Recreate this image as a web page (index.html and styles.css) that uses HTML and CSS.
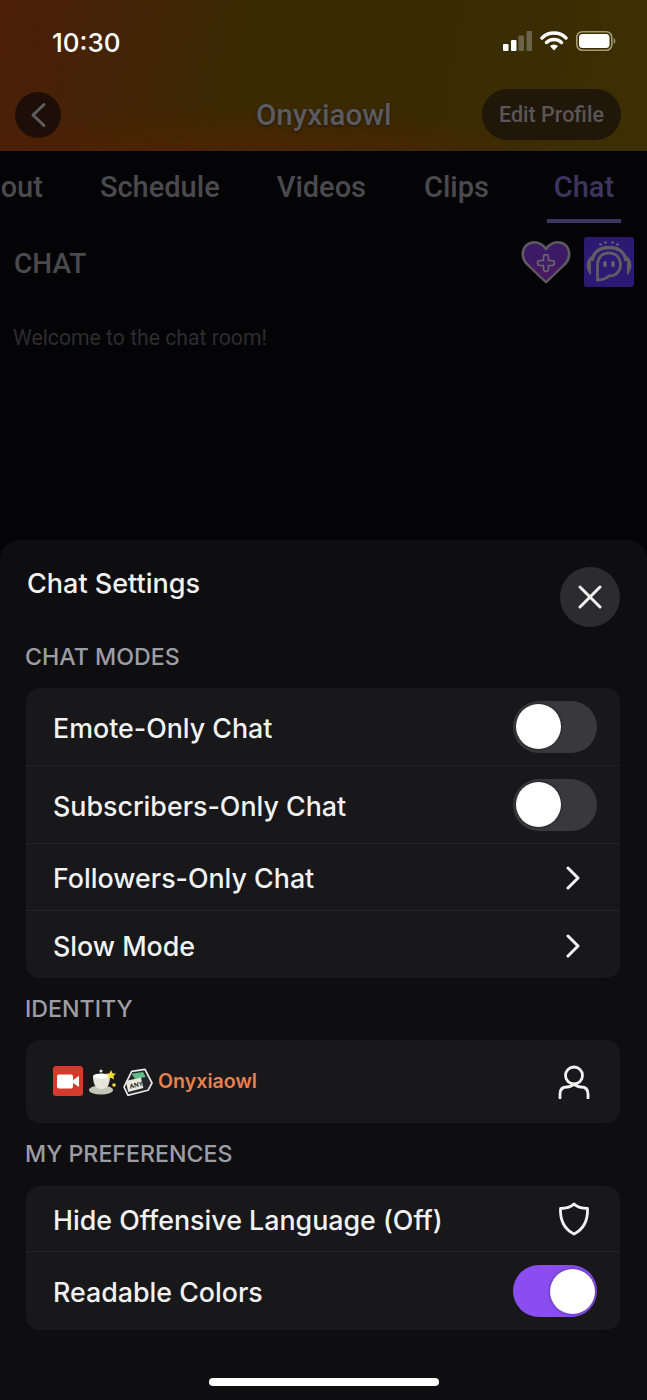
FILE: index.html
```html
<!DOCTYPE html>
<html>
<head>
    <title>Chat Settings</title>
    <link rel="stylesheet" href="styles.css">
</head>
<body>
<div class="screen">
    <header class="top">
        <div class="status">
            <span class="time">10:30</span>
            <div class="status-icons">
                <svg width="29" height="20" viewBox="0 0 29 20">
                    <rect x="0" y="13" width="5.500" height="7" rx="1" fill="#fff"/>
                    <rect x="8" y="9" width="5.500" height="11" rx="1" fill="#fff"/>
                    <rect x="15.500" y="4.500" width="5.500" height="15.500" rx="1" fill="#6b624a"/>
                    <rect x="23.500" y="0" width="5.500" height="20" rx="1" fill="#6b624a"/>
                </svg>
                <svg width="28" height="20" viewBox="0 0 28 20">
                    <path d="M2 7a17 17 0 0 1 24 0M6.500 11.500a11 11 0 0 1 15 0" fill="none" stroke="#fff" stroke-width="3.400" stroke-linecap="round"/>
                    <path d="M10 15a6 6 0 0 1 8 0L14 19.500z" fill="#fff"/>
                </svg>
                <svg width="41" height="20" viewBox="0 0 41 20">
                    <rect x="0.800" y="0.800" width="35" height="18.400" rx="5.500" fill="none" stroke="#a39a78" stroke-width="1.600"/>
                    <rect x="3" y="3" width="30.500" height="14" rx="3.500" fill="#fff"/>
                    <path d="M37.500 7v6c1.300-.5 2-1.700 2-3s-.7-2.500-2-3z" fill="#8f8668"/>
                </svg>
            </div>
        </div>
        <div class="nav">
            <span class="back">
                <svg width="18" height="26" viewBox="0 0 18 26"><path d="M15 2.500 4 13l11 10.500" fill="none" stroke="#5e5e60" stroke-width="3" stroke-linecap="round" stroke-linejoin="round"/></svg>
            </span>
            <span class="nav-title">Onyxiaowl</span>
            <span class="edit-btn">Edit Profile</span>
        </div>
    </header>

    <nav class="tabs">
        <span class="tab tab-about">About</span>
        <span class="tab tab-schedule">Schedule</span>
        <span class="tab tab-videos">Videos</span>
        <span class="tab tab-clips">Clips</span>
        <span class="tab tab-active">Chat</span>
    </nav>

    <div class="chat-head">
        <span class="chat-title">CHAT</span>
        <div class="chat-badges">
            <svg width="50" height="44" viewBox="0 0 50 44">
                <path d="M25 42 5 23C0 17 1 8 7 4c6-3 13-2 18 5 5-7 12-8 18-5 6 4 7 13 2 19z" fill="#3c1a66" stroke="#5d5a60" stroke-width="2.600" stroke-linejoin="round"/>
                <path d="M25 41 8 25c6 3 28 3 34 0z" fill="#4a1a5e" opacity=".7"/>
                <path d="M22.500 17a2.500 2.500 0 0 1 5 0v3.500H31a2.500 2.500 0 0 1 0 5h-3.500V29a2.500 2.500 0 0 1-5 0v-3.500H19a2.500 2.500 0 0 1 0-5h3.500z" fill="#3f2066" stroke="#6a6570" stroke-width="1.600"/>
            </svg>
            <svg class="listen" width="50" height="50" viewBox="0 0 50 50">
                <rect width="50" height="50" rx="3" fill="#2a1a72"/>
                <path d="M16 7.500h1M21 5.500h1M28 5.500h1M33 7.500h1" stroke="#6b6870" stroke-width="2" stroke-linecap="round"/>
                <path d="M8 24c1-9 8-13.500 17-13.500S41 15 42 24" fill="none" stroke="#5f5c66" stroke-width="3.500"/>
                <path d="M6 21.500c-3 3-3.500 10 0 14zM44 21.500c3 3 3.500 10 0 14z" fill="#5f5c66" stroke="#5f5c66" stroke-width="2"/>
                <path d="M25 16c-7 0-11.500 5-11.500 11.500V43c4 0 8.500-1.500 11.500-4 7 0 11.500-5 11.500-11.500S32 16 25 16z" fill="none" stroke="#5f5c66" stroke-width="2.800"/>
                <rect x="19.500" y="24" width="3" height="6" rx="1.500" fill="#6b6870"/>
                <rect x="27.500" y="24" width="3" height="6" rx="1.500" fill="#6b6870"/>
            </svg>
        </div>
    </div>
    <p class="welcome">Welcome to the chat room!</p>

    <section class="sheet">
        <div class="sheet-head">
            <h2>Chat Settings</h2>
            <span class="close">
                <svg width="24" height="24" viewBox="0 0 24 24"><path d="M2 2l20 20M22 2 2 22" stroke="#f2f2f2" stroke-width="3" stroke-linecap="round"/></svg>
            </span>
        </div>

        <h3 class="label label-modes">CHAT MODES</h3>
        <div class="card">
            <div class="row row-tall"><span>Emote-Only Chat</span><span class="toggle"></span></div>
            <div class="row row-tall"><span>Subscribers-Only Chat</span><span class="toggle"></span></div>
            <div class="row"><span>Followers-Only Chat</span><svg class="chev" width="16" height="24" viewBox="0 0 16 24"><path d="M3 2l10 10L3 22" fill="none" stroke="#f2f2f2" stroke-width="3" stroke-linecap="round" stroke-linejoin="round"/></svg></div>
            <div class="row"><span>Slow Mode</span><svg class="chev" width="16" height="24" viewBox="0 0 16 24"><path d="M3 2l10 10L3 22" fill="none" stroke="#f2f2f2" stroke-width="3" stroke-linecap="round" stroke-linejoin="round"/></svg></div>
        </div>

        <h3 class="label label-identity">IDENTITY</h3>
        <div class="card">
            <div class="row row-identity">
                <div class="identity">
                    <svg width="30" height="30" viewBox="0 0 30 30">
                        <rect width="30" height="30" rx="3" fill="#d63a2c"/>
                        <rect x="4" y="8.500" width="16" height="14" rx="2" fill="#fff"/>
                        <path d="M20 14l6-4v11l-6-4z" fill="#fff"/>
                    </svg>
                    <svg width="29" height="27" viewBox="0 0 29 27">
                        <ellipse cx="13" cy="22" rx="12" ry="4.500" fill="#c4c6b8"/>
                        <path d="M5 8h17c0 7-2 13-8.500 13S5 15 5 8z" fill="#e6e6da"/>
                        <ellipse cx="13.500" cy="8" rx="8.500" ry="2.500" fill="#fff"/>
                        <circle cx="13" cy="3" r="1.500" fill="#e8e8dc"/>
                        <path d="M23 2l1.500 3.300 3.500.4-2.600 2.400.7 3.500-3.100-1.800-3.100 1.800.7-3.500L18 5.700l3.500-.4z" fill="#f4d93a"/>
                        <circle cx="26" cy="17" r="1.800" fill="#f4d93a"/>
                    </svg>
                    <svg width="31" height="29" viewBox="0 0 31 29">
                        <path d="M9.700 4.300 23 2.300 30 16l-4 7.300-20 5-4-8.300z" fill="#26262a" stroke="#e8e8e8" stroke-width="1.700" stroke-linejoin="round"/>
                        <path d="M9.700 6.700 21 5l2.700 5L13 12z" fill="#5fbf8a"/>
                        <path d="M3.700 14 19 10.500l2.300 10.500L6.300 25z" fill="#e8e8e0"/>
                        <text x="7.200" y="20.500" transform="rotate(-13 12.500 18)" class="any-key">ANY</text>
                    </svg>
                    <span class="name">Onyxiaowl</span>
                </div>
                <svg class="side-icon" width="32" height="34" viewBox="0 0 32 34">
                    <circle cx="16" cy="10.500" r="8.500" fill="none" stroke="#f2f2f2" stroke-width="2.800"/>
                    <path d="M2 33v-4c0-5 3-7 7-7 3 0 5-1 7-3 2 2 4 3 7 3 4 0 7 2 7 7v4" fill="none" stroke="#f2f2f2" stroke-width="2.800" stroke-linecap="round" stroke-linejoin="round"/>
                </svg>
            </div>
        </div>

        <h3 class="label label-prefs">MY PREFERENCES</h3>
        <div class="card">
            <div class="row row-hide">
                <span>Hide Offensive Language (Off)</span>
                <svg class="side-icon shield" width="32" height="34" viewBox="0 0 32 34">
                    <path d="M16 2c3 3 9 4.500 13.500 4.500C30 19 26 27 16 32 6 27 2 19 2.500 6.500 7 6.500 13 5 16 2z" fill="none" stroke="#f2f2f2" stroke-width="2.800" stroke-linejoin="round"/>
                </svg>
            </div>
            <div class="row row-last"><span>Readable Colors</span><span class="toggle toggle-on"></span></div>
        </div>

        <div class="home-bar"></div>
    </section>
</div>
</body>
</html>
```

FILE: styles.css
```css
* {
    box-sizing: border-box;
}
html, body {
    margin: 0;
    background: #040406;
}
.screen {
    width: 647px;
    height: 1400px;
    overflow: hidden;
    display: flex;
    flex-direction: column;
    font-family: Inter, "Liberation Sans", sans-serif;
}

/* top header */
.top {
    height: 151px;
    padding-top: 27px;
    background:
        radial-gradient(ellipse 340px 70px at 40% 115%, rgba(90, 30, 0, 0.7), rgba(90, 30, 0, 0)),
        linear-gradient(100deg, #4c1f08 0%, #462206 14%, #3a2a04 38%, #392a03 65%, #3c3003 100%);
}
.status {
    display: flex;
    justify-content: space-between;
    align-items: center;
    padding: 0 30px 0 52px;
    height: 28px;
}
.time {
    margin-top: 2px;
    color: #fff;
    font-size: 26px;
    font-weight: 500;
}
.status-icons {
    display: flex;
    align-items: center;
    gap: 8px;
}
.nav {
    display: flex;
    justify-content: space-between;
    align-items: center;
    padding: 0 26px 0 15px;
    margin-top: 34px;
    height: 51px;
    position: relative;
}
.back {
    width: 46px;
    height: 46px;
    border-radius: 50%;
    background: #1d0f07;
    display: flex;
    align-items: center;
    justify-content: center;
}
.nav-title {
    position: absolute;
    left: 256px;
    color: #5a5a60;
    font-family: Roboto, sans-serif;
    font-size: 29.500px;
    font-weight: 500;
    text-shadow: 0 1px 3px rgba(0, 0, 0, 0.5);
}
.edit-btn {
    width: 139px;
    height: 51px;
    border-radius: 26px;
    background: #211708;
    color: #58565a;
    font-family: Roboto, sans-serif;
    font-size: 21.500px;
    font-weight: 500;
    display: flex;
    align-items: center;
    justify-content: center;
}

/* tabs */
.tabs {
    height: 72px;
    display: flex;
    justify-content: flex-end;
    align-items: flex-start;
    padding-right: 26px;
    color: #4a4a4e;
    font-family: Roboto, sans-serif;
    font-size: 29px;
    font-weight: 500;
    white-space: nowrap;
}
.tab {
    padding-top: 19px;
    flex: none;
}
.tab-schedule {
    margin-left: 57px;
}
.tab-videos {
    margin-left: 57px;
}
.tab-clips {
    margin-left: 58px;
}
.tab-active {
    margin-left: 58px;
    width: 74px;
    height: 72px;
    text-align: center;
    color: #3c3560;
    border-bottom: 4px solid #3c3560;
}

.chat-head {
    height: 78px;
    padding: 14px 13px 0 14px;
    display: flex;
    justify-content: space-between;
    align-items: flex-start;
}
.chat-title {
    margin-top: 10px;
    color: #4a4a4e;
    font-family: Roboto, sans-serif;
    font-size: 28px;
    font-weight: 500;
}
.chat-badges {
    display: flex;
    align-items: center;
    gap: 13px;
}
.welcome {
    margin: 24px 0 0 13px;
    height: 215px;
    color: #2c2c30;
    font-family: Roboto, sans-serif;
    font-size: 21.200px;
}

/* settings sheet */
.sheet {
    flex: 1;
    background: #0e0e10;
    border-radius: 20px 20px 0 0;
    padding: 27px 27px 0 26px;
    color: #f2f2f2;
    position: relative;
}
.sheet-head {
    display: flex;
    justify-content: space-between;
    align-items: flex-start;
    height: 60px;
}
.sheet-head h2 {
    margin: 0 0 0 1px;
    font-size: 27px;
    font-weight: 500;
    line-height: 34px;
}
.close {
    width: 60px;
    height: 60px;
    border-radius: 50%;
    background: #2b2b30;
    display: flex;
    align-items: center;
    justify-content: center;
}
.label {
    margin: 0 0 0 -1px;
    height: 61px;
    color: #9d9da5;
    font-size: 23.200px;
    font-weight: 500;
    line-height: 29px;
}
.label-modes {
    padding-top: 16px;
}
.label-identity {
    height: 62px;
    padding-top: 17px;
}
.label-prefs {
    height: 63px;
    padding-top: 17px;
}
.card {
    background: #18181b;
    border-radius: 14px;
}
.row {
    height: 67px;
    padding: 0 27px;
    display: flex;
    justify-content: space-between;
    align-items: center;
    font-size: 26.800px;
    font-weight: 500;
    border-bottom: 1px solid #242428;
}
.row > span:first-child {
    padding-top: 2px;
}
.row:last-child {
    border-bottom: none;
}
.row-tall {
    height: 78px;
    padding-right: 23px;
}
.row-identity {
    height: 83px;
    padding-right: 30px;
}
.row-hide {
    height: 66px;
}
.row-last {
    height: 78px;
    padding-right: 23px;
}
.chev {
    margin: 2px 12px 0 0;
}
.shield {
    margin-right: 3px;
}
.toggle {
    width: 84px;
    height: 52px;
    border-radius: 26px;
    background: #38383d;
    display: flex;
    align-items: center;
    padding: 0 2px 0 3px;
}
.toggle::before {
    content: "";
    width: 45px;
    height: 45px;
    border-radius: 50%;
    background: #fff;
    box-shadow: 0 0 3px rgba(0, 0, 0, 0.5);
}
.toggle-on {
    background: #8a4df0;
    justify-content: flex-end;
}
.identity {
    display: flex;
    align-items: center;
    gap: 5px;
    margin-top: -1px;
}
.name {
    color: #e8804f;
    font-size: 19.600px;
    font-weight: 600;
}
.any-key {
    font-family: "Liberation Sans", sans-serif;
    font-size: 6.500px;
    font-weight: 700;
    fill: #222;
}
.home-bar {
    position: absolute;
    left: 209px;
    bottom: 14px;
    width: 230px;
    height: 8px;
    border-radius: 4px;
    background: #fff;
}
```
